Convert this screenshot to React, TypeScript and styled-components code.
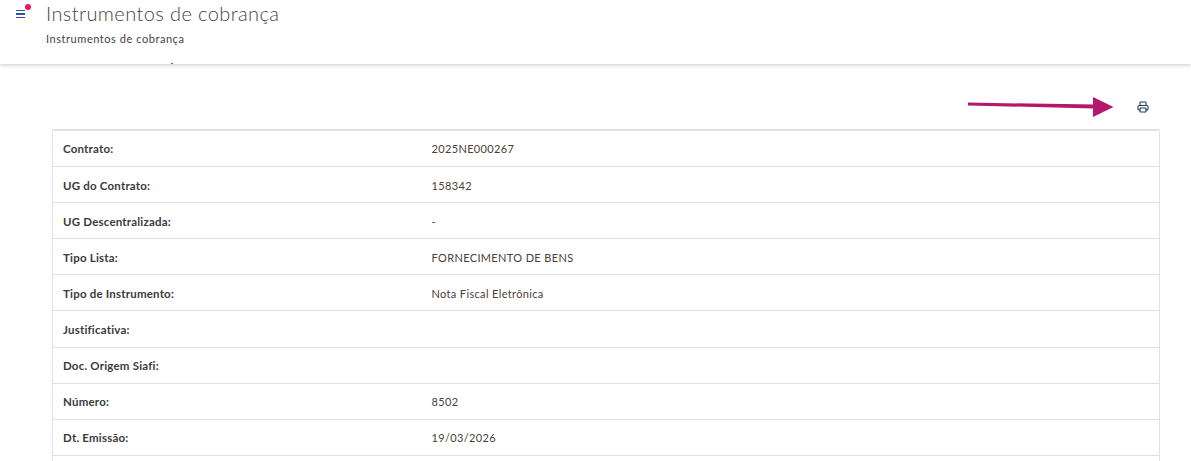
import React from "react";
import styled, { createGlobalStyle } from "styled-components";
import { Printer } from "lucide-react";

const GlobalStyle = createGlobalStyle`
    html, body {
        margin: 0;
        padding: 0;
        height: 100%;
        overflow: hidden;
        background: #fff;
        font-family: "Lato", "Open Sans", sans-serif;
    }
`;

const rows = [
    { label: "Contrato:", value: "2025NE000267" },
    { label: "UG do Contrato:", value: "158342" },
    { label: "UG Descentralizada:", value: "-" },
    { label: "Tipo Lista:", value: "FORNECIMENTO DE BENS" },
    { label: "Tipo de Instrumento:", value: "Nota Fiscal Eletrônica" },
    { label: "Justificativa:", value: "" },
    { label: "Doc. Origem Siafi:", value: "" },
    { label: "Número:", value: "8502" },
    { label: "Dt. Emissão:", value: "19/03/2026" },
    { label: "", value: "" },
];

const App = () => {
    return (
        <Page>
            <GlobalStyle />
            <Header>
                <MenuButton aria-label="Menu">
                    <MenuIcon />
                    <Dot />
                </MenuButton>
                <Titles>
                    <Title>Instrumentos de cobrança</Title>
                    <Subtitle>Instrumentos de cobrança</Subtitle>
                </Titles>
            </Header>

            <Content>
                {/* scrolled text peeking out under the header */}
                <ScrolledTick />
                <Toolbar>
                    <Arrow viewBox="0 0 146 20" aria-hidden="true">
                        <path d="M0 5.6 L126 7.6 L126 11.6 L0 8.4 Z" fill="#b3186b" />
                        <path d="M125 0 L145.5 10 L125 20 Z" fill="#b3186b" />
                    </Arrow>
                    <PrintButton aria-label="Imprimir">
                        <Printer size={12} strokeWidth={2.2} color="#1d3f66" />
                    </PrintButton>
                </Toolbar>

                <Table>
                    {rows.map((row, index) => (
                        <Row key={index}>
                            <Label>{row.label}</Label>
                            <Value>{row.value}</Value>
                        </Row>
                    ))}
                </Table>
            </Content>
        </Page>
    );
};

const Page = styled.div`
    height: 461px;
    overflow: hidden;
    color: #3a3a3a;
`;

const Header = styled.header`
    height: 64px;
    display: flex;
    align-items: flex-start;
    background: #fff;
    box-shadow: 0 1px 4px rgba(0, 0, 0, 0.22);
`;

const MenuButton = styled.button`
    position: relative;
    width: 46px;
    height: 24px;
    padding: 0;
    border: 0;
    background: none;
    flex-shrink: 0;
`;

const MenuIcon = styled.span`
    position: absolute;
    left: 16px;
    top: 10px;
    width: 9px;
    height: 8px;
    background: linear-gradient(
        to bottom,
        #2a56a8 0,
        #2a56a8 1.4px,
        transparent 1.4px,
        transparent 3.3px,
        #2a56a8 3.3px,
        #2a56a8 4.7px,
        transparent 4.7px,
        transparent 6.6px,
        #2a56a8 6.6px,
        #2a56a8 8px
    );
`;

const Dot = styled.span`
    position: absolute;
    left: 25px;
    top: 4px;
    width: 6px;
    height: 6px;
    border-radius: 50%;
    background: #ee1763;
`;

const Titles = styled.div`
    display: flex;
    flex-direction: column;
`;

const Title = styled.h1`
    margin: 0;
    font-size: 20px;
    line-height: 26px;
    font-weight: 300;
    color: #444;
    letter-spacing: 0.4px;
`;

const Subtitle = styled.div`
    margin-top: 6px;
    font-size: 11px;
    line-height: 14px;
    color: #444;
    letter-spacing: 0.55px;
`;

const Content = styled.main`
    position: relative;
    padding: 0 31px 0 52px;
`;

const ScrolledTick = styled.span`
    position: absolute;
    left: 171px;
    top: -1px;
    width: 2px;
    height: 1px;
    background: #3a6fb0;
`;

const Toolbar = styled.div`
    height: 65px;
    display: flex;
    justify-content: flex-end;
    align-items: flex-end;
    gap: 23px;
    padding-bottom: 12.5px;
    box-sizing: border-box;
`;

const Arrow = styled.svg`
    width: 146px;
    height: 20px;
    display: block;
`;

const PrintButton = styled.button`
    display: flex;
    padding: 0;
    margin: 0 11px 4px 0;
    border: 0;
    background: none;
`;

const Table = styled.div`
    border: 1px solid #dee2e6;
    border-top-width: 2px;
    border-radius: 2px 2px 0 0;
`;

const Row = styled.div`
    display: grid;
    grid-template-columns: 368.5px 1fr;
    height: 36.1px;
    box-sizing: border-box;
    align-items: center;
    border-bottom: 1px solid #dee2e6;
    padding: 0.8px 10px 0;
    font-size: 11px;
`;

const Label = styled.div`
    font-size: 11.5px;
    font-weight: 700;
    color: #3b3b3b;
    letter-spacing: 0.2px;
`;

const Value = styled.div`
    color: #4a4136;
    letter-spacing: 0.35px;
`;

export default App;
